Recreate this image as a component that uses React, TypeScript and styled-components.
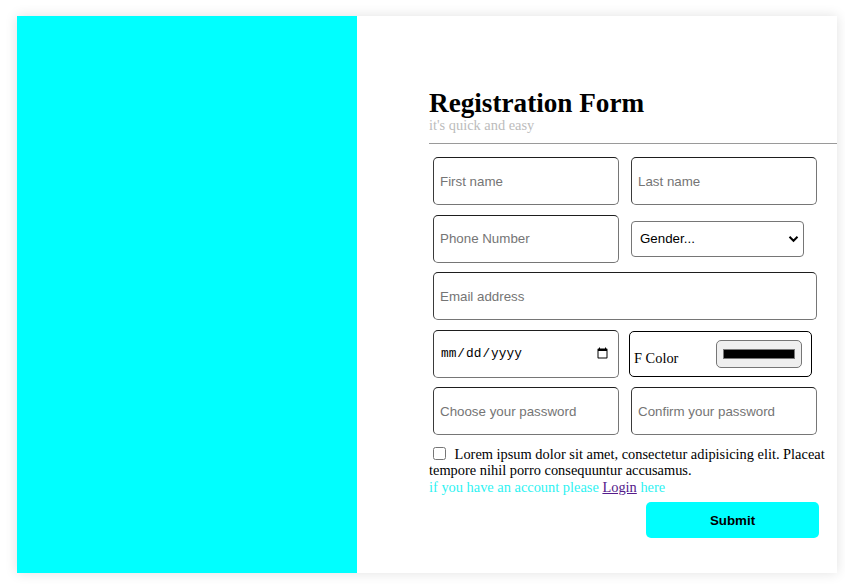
import React from "react";
import styled, { createGlobalStyle } from "styled-components";

const GlobalStyle = createGlobalStyle`
  html, body { margin: 0; padding: 0; background: #ffffff; }
  body { font-family: "Liberation Serif", "Times New Roman", serif; color: #000; }
  * { box-sizing: border-box; }
`;

const Page = styled.div`
  padding: 16px 8px 14px 17px;
`;

const Card = styled.div`
  display: flex;
  width: 820px;
  height: 557px;
  background: #ffffff;
  box-shadow: 0 0 12px rgba(0, 0, 0, 0.12);
`;

const SidePanel = styled.div`
  width: 340px;
  flex: none;
  background: #00ffff;
`;

const FormArea = styled.form`
  flex: 1;
  display: flex;
  flex-direction: column;
  padding: 73px 0 0 72px;
`;

const Title = styled.h1`
  margin: 0;
  font-size: 27.2px;
  line-height: 28px;
  font-weight: bold;
`;

const Subtitle = styled.p`
  margin: 0;
  font-size: 14.4px;
  line-height: 16px;
  color: #bcbcbc;
`;

const Divider = styled.hr`
  margin: 10px 0 0 0;
  border: none;
  border-top: 1px solid #9a9a9a;
  height: 0;
`;

const FieldGrid = styled.div`
  display: grid;
  grid-template-columns: 186px 186px;
  grid-auto-rows: 48px;
  column-gap: 12px;
  row-gap: 9.5px;
  margin: 13px 0 0 4px;
`;

const TextInput = styled.input<{ $span?: boolean }>`
  width: 100%;
  height: 100%;
  grid-column: ${(p) => (p.$span ? "span 2" : "auto")};
  border: 1px solid #767676;
  border-top-color: #1e1e1e;
  border-left-color: #3a3a3a;
  border-radius: 5px;
  padding: 0 6px;
  font-family: Arial, "Liberation Sans", sans-serif;
  font-size: 13.33px;
  color: #000;
  background: #fff;
  outline: none;
  &::placeholder { color: #757575; }
`;

const DateInput = styled(TextInput)`
  font-family: "Liberation Mono", "Courier New", monospace;
  font-size: 12.8px;
  padding: 0 7px 0 6px;
  &::-webkit-calendar-picker-indicator { margin: 0; }
`;

const SelectWrap = styled.div`
  position: relative;
  align-self: center;
  width: 173px;
  height: 36px;
`;

const Select = styled.select`
  appearance: none;
  width: 100%;
  height: 100%;
  border: 1px solid #767676;
  border-radius: 4px;
  padding: 0 8px;
  font-family: Arial, "Liberation Sans", sans-serif;
  font-size: 13.33px;
  color: #000;
  background: #fff;
  outline: none;
`;

const Chevron = styled.svg`
  position: absolute;
  right: 5px;
  top: 14px;
  width: 11px;
  height: 8px;
  pointer-events: none;
`;

const ColorBox = styled.div`
  display: flex;
  align-items: center;
  justify-content: space-between;
  align-self: center;
  width: 183px;
  height: 46px;
  margin-left: -2px;
  border: 1px solid #000;
  border-radius: 5px;
  padding: 0 9px 0 4px;
`;

const ColorLabel = styled.label`
  font-size: 14.4px;
  line-height: 16px;
  padding-top: 8px;
`;

const ColorInput = styled.input`
  width: 86px;
  height: 28px;
  padding: 0;
  border: 1px solid #767676;
  border-radius: 5px;
  background: #efefef;
  cursor: pointer;
  &::-webkit-color-swatch-wrapper { padding: 8px 6px; }
  &::-webkit-color-swatch { border: 1px solid #777; border-radius: 0; }
`;

const Terms = styled.p`
  margin: 10.5px 0 0 0;
  font-size: 14.4px;
  line-height: 16.5px;
`;

const Check = styled.input`
  width: 13px;
  height: 13px;
  margin: 0 5px 0 4px;
  vertical-align: -1px;
`;

const LoginLine = styled.p`
  margin: 0;
  font-size: 14.4px;
  line-height: 16.5px;
  color: #2ff2f2;
`;

const LoginLink = styled.a`
  color: #551a8b;
  text-decoration: underline;
`;

const ButtonRow = styled.div`
  display: flex;
  justify-content: flex-end;
  padding-right: 18px;
  margin-top: 7px;
`;

const SubmitButton = styled.button`
  width: 173px;
  height: 36px;
  border: none;
  border-radius: 5px;
  background: #00ffff;
  color: #000;
  font-family: Arial, "Liberation Sans", sans-serif;
  font-size: 13.33px;
  font-weight: bold;
  cursor: pointer;
`;

export default function App() {
  return (
    <>
      <GlobalStyle />
      <Page>
        <Card>
          <SidePanel />
          <FormArea onSubmit={(e) => e.preventDefault()}>
            <Title>Registration Form</Title>
            <Subtitle>it's quick and easy</Subtitle>
            <Divider />
            <FieldGrid>
              <TextInput type="text" placeholder="First name" />
              <TextInput type="text" placeholder="Last name" />
              <TextInput type="text" placeholder="Phone Number" />
              <SelectWrap>
                <Select defaultValue="">
                  <option value="">Gender...</option>
                  <option value="m">Male</option>
                  <option value="f">Female</option>
                </Select>
                <Chevron viewBox="0 0 11 8">
                  <path d="M1.5 1.8 L5.5 5.8 L9.5 1.8" fill="none" stroke="#000" strokeWidth="2" />
                </Chevron>
              </SelectWrap>
              <TextInput type="email" placeholder="Email address" $span />
              <DateInput type="date" />
              <ColorBox>
                <ColorLabel htmlFor="fcolor">F Color</ColorLabel>
                <ColorInput id="fcolor" type="color" defaultValue="#000000" />
              </ColorBox>
              <TextInput type="password" placeholder="Choose your password" />
              <TextInput type="password" placeholder="Confirm your password" />
            </FieldGrid>
            <Terms>
              <Check type="checkbox" />
              {" "}Lorem ipsum dolor sit amet, consectetur adipisicing elit. Placeat tempore nihil porro consequuntur accusamus.
            </Terms>
            <LoginLine>
              if you have an account please <LoginLink href="#">Login</LoginLink> here
            </LoginLine>
            <ButtonRow>
              <SubmitButton type="submit">Submit</SubmitButton>
            </ButtonRow>
          </FormArea>
        </Card>
      </Page>
    </>
  );
}
